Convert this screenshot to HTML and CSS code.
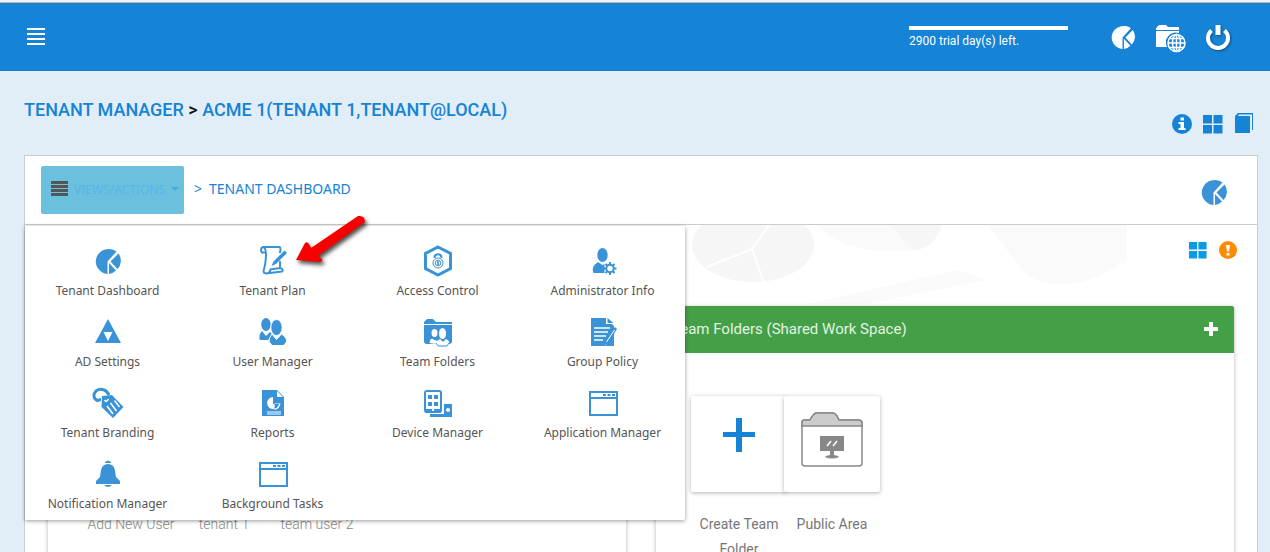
FILE: index.html
```html
<!DOCTYPE html>
<html lang="en">
<head>
    <meta charset="UTF-8">
    <meta name="viewport" content="width=device-width, initial-scale=1.0">
    <title>Tenant Dashboard</title>
    <link rel="stylesheet" href="styles.css">
</head>
<body>
    <!-- shared icons -->
    <svg class="sprite" aria-hidden="true">
        <symbol id="pie" viewBox="0 0 28 28">
            <path d="M13.500 14.500V27A13 12.500 0 1 1 22.500 4.500Z"/>
            <path d="M24.500 6.500A12 12 0 0 1 23.500 22L16.500 14.500Z"/>
            <path d="M15 16L22 23.500A12 12 0 0 1 15 27Z"/>
        </symbol>
        <symbol id="tiles" viewBox="0 0 20 20">
            <path d="M0 1h9v8.500H0zM10.500 1h9v8.500h-9zM0 11h9v8.500H0zM10.500 11h9v8.500h-9z"/>
        </symbol>
        <symbol id="window" viewBox="0 0 32 32">
            <path fill-rule="evenodd" d="M2 4h29v25H2zM4 6v4h25V6zM4 12v15h25V12z"/>
            <path d="M16 7h3v2h-3zM20.500 7h3v2h-3zM25 7h3v2h-3z"/>
        </symbol>
    </svg>

    <header class="topbar">
        <button type="button" class="icon-btn" aria-label="Menu">
            <svg width="18" height="18" viewBox="0 0 18 18"><path d="M0 0h18v2H0zM0 5h18v2H0zM0 10h18v2H0zM0 15h18v2H0z"/></svg>
        </button>
        <div class="trial">
            <div class="trial-bar"></div>
            <span>2900 trial day(s) left.</span>
        </div>
        <nav class="topbar-icons">
            <a href="#" aria-label="Dashboard"><svg width="28" height="26"><use href="#pie"/></svg></a>
            <a href="#" aria-label="Web files">
                <svg width="30" height="32" viewBox="0 0 30 32">
                    <path d="M0 7V5l3-3h7l2 2h11v3z"/>
                    <path d="M0 8h23v2a10 10 0 0 0-12 14H0z"/>
                    <g class="globe"><circle cx="20.500" cy="20" r="8.500"/><ellipse cx="20.500" cy="20" rx="4" ry="8.500"/><path d="M20.500 11.500v17M12 20h17M13.500 15.500h14M13.500 24.500h14"/></g>
                </svg>
            </a>
            <a href="#" aria-label="Sign out">
                <svg class="power" width="26" height="28" viewBox="0 0 26 28"><path d="M6.500 7.500A10 10 0 1 0 19.500 7.500"/><path class="power-key" d="M13 2v10"/></svg>
            </a>
        </nav>
    </header>

    <main class="page">
        <div class="title-row">
            <h1><a href="#">TENANT MANAGER</a> &gt; <a href="#">ACME 1(TENANT 1,TENANT@LOCAL)</a></h1>
            <div class="title-icons">
                <a href="#" aria-label="Info"><svg width="20" height="20" viewBox="0 0 20 20"><circle cx="10" cy="10" r="10"/><path class="cut" d="M8.500 3.500h3.500v3H8.500zM6.500 8h5.500v6h1.500v2h-7v-2h2v-4h-2z"/></svg></a>
                <a href="#" aria-label="Tiles"><svg width="20" height="20"><use href="#tiles"/></svg></a>
                <a href="#" class="book" aria-label="Guide"><svg width="20" height="21" viewBox="0 0 20 21"><path d="M1 4l3-3h15v17h-1V2.500H5L4 4h12v17H1z"/></svg></a>
            </div>
        </div>

        <section class="panel">
            <div class="panel-head">
                <button type="button" class="views-btn">
                    <svg width="17" height="16" viewBox="0 0 17 16"><path d="M0 0h17v3H0zM0 4h17v3H0zM0 8h17v3H0zM0 12h17v3H0z"/></svg>
                    VIEWS/ACTIONS
                    <span class="caret"></span>
                </button>
                <div class="crumb"><span>&gt;</span><span>TENANT DASHBOARD</span></div>
                <a href="#" class="panel-pie" aria-label="Dashboard"><svg width="28" height="28"><use href="#pie"/></svg></a>
            </div>

            <nav class="menu">
                <a href="#"><svg><use href="#pie" x="2" y="2" width="28" height="28"/></svg>Tenant Dashboard</a>
                <a href="#"><svg viewBox="0 0 32 32"><path class="line" d="M9 7.500H5C3.500 6 3.500 3 6 2H22.500C24.500 3 23 6 23 8M7 2.500C10 5 9 14 8 20 7.500 24 4.500 28 9 28.500L25 26.500C26.500 25 25 23 23 23L13.500 24.500C13 27 11 28.500 9 28.500M23 16v7"/><path d="M27.500 5.500l2.500 2.500-11 11-4.500 2 2-4.500z"/></svg>Tenant Plan</a>
                <a href="#"><svg viewBox="0 0 32 32"><path class="line thick" d="M16 2l12.500 6.500v15L16 30 3.500 23.500v-15z"/><circle class="line thin" cx="16" cy="18" r="5"/><circle class="line thin" cx="16" cy="18" r="2.800"/><path class="line" d="M12.500 13c0-5 7-5 7 0"/><path d="M15.200 16h1.600v4h-1.600z"/></svg>Access Control</a>
                <a href="#"><svg viewBox="0 0 32 32"><ellipse cx="15.500" cy="10" rx="5.200" ry="7"/><path d="M11 17l4.500 3 2-1v9H6.500Q3.500 22 11 17z"/><circle class="line" cx="23" cy="23.500" r="3.700"/><path class="line" d="M23 17v3M23 27v3M16.500 23.500h3M26.500 23.500h3M18.500 19l2 2M25.500 26l2 2M27.500 19l-2 2M20.500 26l-2 2"/></svg>Administrator Info</a>
                <a href="#"><svg viewBox="0 0 32 32"><path fill-rule="evenodd" d="M16 3l13 24H3zM11.500 16l4.500 9 4.500-9z"/></svg>AD Settings</a>
                <a href="#"><svg viewBox="0 0 32 32"><ellipse cx="9" cy="8.500" rx="4.800" ry="6.500"/><path d="M5 15l4 5 4-4 3 3-5 5H3q-2-5 2-9z"/><g class="edge"><ellipse cx="19.500" cy="11.500" rx="5.700" ry="8"/><path d="M15 18l4.500 5.500 5-5.500q6 4 5 8l-3 3.500H15l-3-4q0-4 3-7.500z"/></g></svg>User Manager</a>
                <a href="#"><svg viewBox="0 0 32 32"><path d="M2 8V6l3-3h6l3 3h16v2z"/><path d="M2 9h28v16q0 3-3 3H5q-3 0-3-3z"/><g class="cut"><ellipse cx="12.500" cy="17" rx="3" ry="4"/><ellipse cx="20.500" cy="17.500" rx="3.500" ry="5.500"/><path d="M7 27q0-4 3-5l3 2 2 1 3-2 3 3 3-3q4 2 3 5l-2 3H16l-2-3z"/></g><path class="line thin" d="M7 27q0-4 3-5l3 2M14 27l2 3h9l2-3"/></svg>Team Folders</a>
                <a href="#"><svg viewBox="0 0 32 32"><path d="M4 2h15v6h6l2 2v20H4z"/><path d="M20.500 2l6 5h-6z"/><g class="cut-line"><path d="M7 12h16M7 16h14M7 20h12M7 24h9"/><path d="M28 13L18 29"/></g><path d="M28 11l2 2-8 13-5 4 1-5z"/><path class="cut-line hair" d="M27.500 14l-8 12"/></svg>Group Policy</a>
                <a href="#"><svg viewBox="0 0 32 32"><path class="line thick" d="M6 14C1 12 1 7 4 4q4-3 8-1 3 1 5 5"/><path d="M5 12l4-1v3l-3 1zM10 9l10-1 11.500 12L21 31 9.500 20z"/><g class="cut-line"><path d="M12.500 13q2 3 4-1M15 19l6 8M18.500 16l6 8M22.500 13.500l5 6.500"/></g></svg>Tenant Branding</a>
                <a href="#"><svg viewBox="0 0 32 32"><path d="M5 3h15l7 7v19H5z"/><path class="cut" d="M20 4v6h6zM16 17h6a6 6 0 1 1-6-7zM17.500 16.500V23q5-1 6-6.500zM10 24.500h14v1H10zM10 26.500h14v1H10z"/></svg>Reports</a>
                <a href="#"><svg viewBox="0 0 32 32"><rect class="line" x="3" y="4" width="16" height="21" rx="2"/><path d="M6 8h4v4H6zM12 8h4v4h-4zM6 15h4v4H6zM12 15h4v4h-4zM3 22h7v2h2v-2h7v4H3z"/><path fill-rule="evenodd" d="M22 17h8v13H8v-3h14zM26 21a2 2 0 1 0 .1 0z"/></svg>Device Manager</a>
                <a href="#"><svg><use href="#window"/></svg>Application Manager</a>
                <a href="#"><svg viewBox="0 0 32 32"><path d="M12.500 5q3.500-5 7 0zM16 6c8 0 7 9 8 13l4 4v3H4v-3l4-4c1-4 0-13 8-13zM12 27h8q-4 4-8 0z"/></svg>Notification Manager</a>
                <a href="#"><svg><use href="#window"/></svg>Background Tasks</a>
            </nav>

            <svg class="arrow" width="76" height="52" viewBox="0 0 76 52" aria-hidden="true">
                <path d="M2 46L11 29q2-2 4 1l2 4L64 2q7-1 7 6L24 42l4 3q1 3-2 3z"/>
            </svg>

            <div class="board">
                <svg class="board-art" viewBox="0 0 580 82" aria-hidden="true">
                    <ellipse cx="76" cy="20" rx="61" ry="37"/>
                    <path d="M213 0h52q-8 25-30 25z"/>
                    <path class="board-pale" d="M140 0h73l22 25Q170 32 140 0zM310 0h140v35q-60 40-100 15z"/>
                    <path class="board-pale" d="M130 79l150-34 30 10-120 24z"/>
                    <path class="board-split" d="M95-4L75 24 30 42M75 24l12 34"/>
                </svg>
                <div class="board-tools">
                    <a href="#" aria-label="Tiles"><svg class="sky" width="18" height="18"><use href="#tiles"/></svg></a>
                    <a href="#" aria-label="Alerts"><svg class="warn" width="18" height="18" viewBox="0 0 18 18"><circle cx="9" cy="9" r="9"/><path class="cut" d="M7 4h4l-1 6.500H8zM7.500 12h3v2.500h-3z"/></svg></a>
                </div>

                <div class="cards">
                    <article class="card">
                        <header class="card-head"><h2>Users</h2></header>
                        <ul class="tiles tiles-light">
                            <li><div class="tile"></div>Add New User</li>
                            <li><div class="tile"></div>tenant 1</li>
                            <li><div class="tile"></div>team user 2</li>
                        </ul>
                    </article>
                    <article class="card">
                        <header class="card-head">
                            <h2>Team Folders (Shared Work Space)</h2>
                            <button type="button" class="icon-btn" aria-label="Add team folder"><svg width="14" height="14" viewBox="0 0 14 14"><path d="M5 0h4v5h5v4H9v5H5V9H0V5h5z"/></svg></button>
                        </header>
                        <ul class="tiles">
                            <li>
                                <div class="tile"><svg class="plus" width="32" height="34" viewBox="0 0 32 34"><path d="M13 0h6v14h13v5H19v15h-6V19H0v-5h13z"/></svg></div>
                                Create Team Folder
                            </li>
                            <li>
                                <div class="tile">
                                    <svg class="folder" width="62" height="56" viewBox="0 0 62 56">
                                        <path class="folder-body" d="M1 15V11q0-2 3-2h5q3-6 6-7h17q3 0 6 7h19q4 0 4 3v40q0 3-3 3H4q-3 0-3-3z"/>
                                        <path class="folder-flap" d="M1 15V11q0-2 3-2h5q3-6 6-7h17q3 0 6 7h19q4 0 4 3v3z"/>
                                        <path class="screen" d="M19 25h24v15H33v4q5 1 5 2-7 3-14 0 0-1 5-2v-4H19z"/>
                                        <path class="glare" d="M26 35l4-5M32 35l4-5"/>
                                    </svg>
                                </div>
                                Public Area
                            </li>
                        </ul>
                    </article>
                </div>
            </div>
        </section>
    </main>
</body>
</html>
```

FILE: styles.css
```css
* {
    box-sizing: border-box;
}

html,
body {
    height: 100%;
}

body {
    margin: 0;
    overflow: hidden;
    background-color: #e1eef8;
    font-family: Roboto, "Liberation Sans", sans-serif;
    font-size: 14px;
    color: #777;
}

a {
    color: #1583d6;
    text-decoration: none;
}

svg {
    display: block;
    fill: currentColor;
}

.sprite {
    position: absolute;
    width: 0;
    height: 0;
}

.icon-btn {
    padding: 0;
    border: none;
    background: none;
    color: #fff;
    cursor: pointer;
}

.cut {
    fill: #fff;
}

/* top bar */
.topbar {
    display: flex;
    align-items: center;
    height: 71px;
    padding: 3px 39px 0 27px;
    background: linear-gradient(#f0f0f0 2px, #b5b5b5 2px, #b5b5b5 3px, #1583d6 3px);
    color: #fff;
}

.trial {
    width: 159px;
    margin-left: auto;
    padding-top: 2px;
    font-size: 12px;
    line-height: 20px;
}

.trial-bar {
    height: 4px;
    margin-bottom: 1px;
    background-color: #fff;
}

.topbar-icons {
    display: flex;
    align-items: center;
    gap: 19px;
    margin-left: 41px;
}

.topbar-icons a {
    color: #fff;
}

.topbar-icons a:nth-child(2) {
    padding-top: 4px;
}

.globe {
    fill: none;
    stroke: #fff;
    stroke-width: 1.5;
}

.power {
    fill: none;
    stroke: #fff;
    stroke-width: 4;
    filter: drop-shadow(1px 1px 1px rgba(0, 0, 0, 0.4));
}

.power-key {
    stroke-width: 5;
}

/* page title */
.page {
    padding: 0 12px 0 24px;
}

.title-row {
    display: flex;
    justify-content: space-between;
    height: 84px;
}

h1 {
    margin: 0;
    font-size: 18px;
    font-weight: 500;
    line-height: 78px;
    color: #111;
}

.title-icons {
    display: flex;
    align-items: center;
    gap: 11px;
    padding: 22px 4px 0 0;
}

.book {
    padding-bottom: 4px;
}

/* panel */
.panel {
    position: relative;
    border: 1px solid #ccc;
    background-color: #fff;
}

.panel-head {
    display: flex;
    align-items: center;
    height: 69px;
    padding: 0 29px 0 16px;
    border-bottom: 1px solid #ccc;
    font-family: "Noto Sans", "Open Sans", sans-serif;
}

.views-btn {
    display: flex;
    align-items: center;
    gap: 6px;
    height: 48px;
    padding: 0 5px 2px 10px;
    border: none;
    border-radius: 2px;
    background-color: #6bc1dd;
    font-family: "Noto Sans", "Open Sans", sans-serif;
    font-size: 12px;
    color: #54b5e8;
    cursor: pointer;
}

.views-btn svg {
    color: #555;
}

.caret {
    border: 4px solid transparent;
    border-top-color: #3fabe6;
    border-bottom: none;
}

.crumb {
    display: flex;
    gap: 7px;
    margin-left: 10px;
    padding-bottom: 3px;
    color: #1583d6;
}

.panel-pie {
    margin-left: auto;
    padding-top: 4px;
    color: #3a93d6;
}

/* views menu */
.menu {
    position: absolute;
    top: 70px;
    left: 0;
    z-index: 2;
    display: grid;
    grid-template-columns: repeat(4, 165px);
    grid-auto-rows: 71px;
    padding: 5px 0;
    border-radius: 0 0 2px 0;
    background-color: #fff;
    box-shadow: 0 1px 4px rgba(0, 0, 0, 0.4);
}

.menu a {
    display: flex;
    flex-direction: column;
    align-items: center;
    gap: 4px;
    padding-top: 14px;
    font-family: "Noto Sans", "Open Sans", sans-serif;
    font-size: 12px;
    line-height: 20px;
    color: #555;
}

.menu svg {
    width: 32px;
    height: 32px;
    color: #3a93d6;
}

.line {
    fill: none;
    stroke: currentColor;
    stroke-width: 2;
}

.thick {
    stroke-width: 3;
}

.thin {
    stroke-width: 1;
}

.edge {
    stroke: #fff;
    stroke-width: 1;
}

.cut-line {
    fill: none;
    stroke: #fff;
    stroke-width: 1.5;
}

.hair {
    stroke-width: 1;
}

.arrow {
    position: absolute;
    top: 58px;
    left: 269px;
    z-index: 3;
    fill: #f80000;
    filter: drop-shadow(2px 3px 2px rgba(0, 0, 0, 0.7));
}

/* dashboard */
.board {
    position: relative;
    padding: 14px 23px 40px;
}

.board-art {
    position: absolute;
    top: 0;
    right: 0;
    width: 580px;
    fill: #f6f6f6;
}

.board-pale {
    fill: #fafafa;
}

.board-split {
    fill: none;
    stroke: #fff;
    stroke-width: 2;
}

.board-tools {
    position: relative;
    display: flex;
    justify-content: flex-end;
    gap: 12px;
    height: 67px;
    padding-top: 2px;
    margin-right: -3px;
}

.sky {
    color: #0b9ae6;
}

.warn {
    color: #ff8c00;
}

.cards {
    position: relative;
    display: grid;
    grid-template-columns: 1fr 1fr;
    gap: 30px;
}

.card {
    min-height: 320px;
    border-radius: 2px;
    background-color: #fff;
    box-shadow: 0 1px 4px rgba(0, 0, 0, 0.3);
}

.card-head {
    display: flex;
    align-items: center;
    justify-content: space-between;
    height: 47px;
    padding: 0 16px 2px;
    border-radius: 2px 2px 0 0;
    background-color: #43a047;
}

.card-head h2 {
    margin: 0;
    font-size: 15px;
    font-weight: 400;
    color: #e3f2e3;
}

.tiles {
    display: flex;
    margin: 0;
    padding: 43px 35px;
    list-style: none;
}

.tiles-light {
    color: #888;
    font-weight: 300;
}

/* tiles overlap a little, like stacked cards */
.tiles li {
    width: 96px;
    margin-right: -3px;
    line-height: 25px;
    text-align: center;
}

.tile {
    display: flex;
    align-items: center;
    justify-content: center;
    height: 96px;
    margin-bottom: 20px;
    border-radius: 2px;
    background-color: #fff;
    box-shadow: 0 1px 4px rgba(0, 0, 0, 0.3);
}

.plus {
    margin-bottom: 18px;
    color: #1583d6;
}

.folder {
    margin-bottom: 10px;
    stroke: #888;
    stroke-width: 1.5;
}

.folder-body {
    fill: #fff;
}

.folder-flap {
    fill: #ccc;
}

.screen {
    fill: #888;
    stroke: none;
}

.glare {
    stroke: #fff;
}
```
